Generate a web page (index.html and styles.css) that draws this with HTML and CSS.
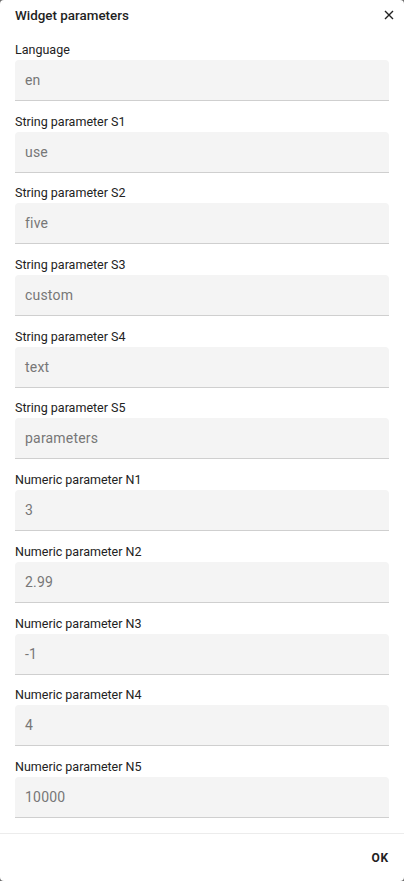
FILE: index.html
```html
<!DOCTYPE html>
<html lang="en">
<head>
<meta charset="utf-8">
<title>Widget parameters</title>
<link rel="stylesheet" href="styles.css">
</head>
<body>
<div class="dialog">
  <div class="header">
    <span class="title">Widget parameters</span>
    <button class="close" aria-label="Close">
      <svg width="10" height="10" viewBox="0 0 10 10"><path d="M1 1L9 9M9 1L1 9" stroke="#222" stroke-width="1.4" fill="none"/></svg>
    </button>
  </div>
  <div class="content">
    <div class="field"><label class="label">Language</label><div class="input">en</div></div>
    <div class="field"><label class="label">String parameter S1</label><div class="input">use</div></div>
    <div class="field"><label class="label">String parameter S2</label><div class="input">five</div></div>
    <div class="field"><label class="label">String parameter S3</label><div class="input">custom</div></div>
    <div class="field"><label class="label">String parameter S4</label><div class="input">text</div></div>
    <div class="field"><label class="label">String parameter S5</label><div class="input">parameters</div></div>
    <div class="field"><label class="label">Numeric parameter N1</label><div class="input">3</div></div>
    <div class="field"><label class="label">Numeric parameter N2</label><div class="input">2.99</div></div>
    <div class="field"><label class="label">Numeric parameter N3</label><div class="input">-1</div></div>
    <div class="field"><label class="label">Numeric parameter N4</label><div class="input">4</div></div>
    <div class="field"><label class="label">Numeric parameter N5</label><div class="input">10000</div></div>
  </div>
  <div class="footer">
    <button class="ok">OK</button>
  </div>
</div>
</body>
</html>
```

FILE: styles.css
```css
html, body {
  margin: 0;
  padding: 0;
  height: 100%;
}
body {
  background: #6b6b6b;
  font-family: Roboto, "Liberation Sans", sans-serif;
  color: #222;
}
.dialog {
  background: #fff;
  width: 404px;
  height: 881px;
  border-radius: 4px;
  display: flex;
  flex-direction: column;
  box-sizing: border-box;
}
.header {
  display: flex;
  align-items: center;
  justify-content: space-between;
  height: 30px;
  padding: 0 10px 0 15px;
}
.title {
  font-size: 13.4px;
  font-weight: 500;
  color: #1f1f1f;
}
.close {
  border: 0;
  background: none;
  padding: 0;
  width: 10px;
  height: 10px;
  display: flex;
  cursor: pointer;
}
.content {
  flex: 1;
  padding: 13px 15px 0 15px;
  display: flex;
  flex-direction: column;
  gap: 13.7px;
}
.field {
  display: flex;
  flex-direction: column;
  gap: 3px;
}
.label {
  font-size: 12.5px;
  line-height: 14px;
  color: #222;
}
.input {
  height: 40px;
  background: #f4f4f4;
  border-bottom: 1px solid #cfcfcf;
  border-radius: 4px 4px 0 0;
  padding: 0 10px;
  font-size: 14px;
  color: #777;
  display: flex;
  align-items: center;
  letter-spacing: 0.2px;
}
.footer {
  height: 48px;
  border-top: 1px solid #ececec;
  display: flex;
  align-items: center;
  justify-content: flex-end;
  padding: 0 15px;
  box-sizing: border-box;
}
.ok {
  border: 0;
  background: none;
  padding: 0;
  font-family: Roboto, "Liberation Sans", sans-serif;
  font-size: 12px;
  font-weight: 700;
  letter-spacing: 0.8px;
  color: #222;
  cursor: pointer;
}
```
